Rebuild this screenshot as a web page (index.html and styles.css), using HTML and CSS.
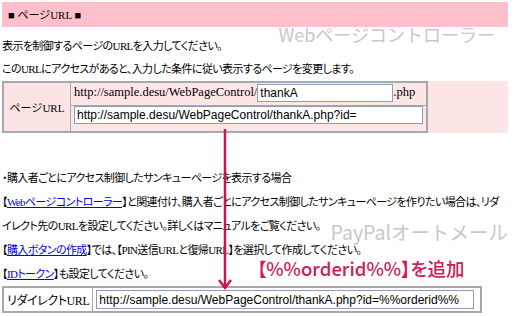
FILE: index.html
```html
<!DOCTYPE html>
<html lang="ja">
<head>
    <meta charset="UTF-8">
    <title>ページURL</title>
    <link rel="stylesheet" href="styles.css">
</head>
<body>
    <div class="page">
        <div class="head">■ ページURL ■</div>
        <div class="mark mark-wpc">Webページコントローラー</div>
        <p>表示を制御するページのURLを入力してください。</p>
        <p>このURLにアクセスがあると、入力した条件に従い表示するページを変更します。</p>

        <div class="box">
            <table class="form form-url">
                <tr>
                    <th rowspan="2">ページURL</th>
                    <td>http://sample.desu/WebPageControl/<input type="text" class="in-short" value="thankA">.php</td>
                </tr>
                <tr>
                    <td><input type="text" class="in-long" value="http://sample.desu/WebPageControl/thankA.php?id="></td>
                </tr>
            </table>
        </div>

        <div class="sect">
            <p>・購入者ごとにアクセス制御したサンキューページを表示する場合</p>
            <p>【<a href="#">Webページコントローラー</a>】と関連付け、購入者ごとにアクセス制御したサンキューページを作りたい場合は、リダ<br>イレクト先のURLを設定してください。詳しくはマニュアルをご覧ください。</p>
            <p>【<a href="#">購入ボタンの作成</a>】では、【PIN送信URLと復帰URL】を選択して作成してください。</p>
            <p>【<a href="#">IDトークン</a>】も設定してください。</p>
            <div class="mark mark-paypal">PayPalオートメール</div>
            <div class="note">【%%orderid%%】を追加</div>
        </div>

        <table class="form form-redirect">
            <tr>
                <th>リダイレクトURL</th>
                <td><input type="text" class="in-redirect" value="http://sample.desu/WebPageControl/thankA.php?id=%%orderid%%"></td>
            </tr>
        </table>

        <svg class="arrow" width="14" height="162" viewBox="0 0 14 162">
            <line x1="7" y1="0" x2="7" y2="159" stroke="#c8174c" stroke-width="2.5"/>
            <polyline points="1,151 7,159 13,151" fill="none" stroke="#c8174c" stroke-width="2.5"/>
        </svg>
    </div>
</body>
</html>
```

FILE: styles.css
```css
body {
    margin: 2px;
    font-family: "Liberation Serif", "Noto Sans CJK JP", serif;
    font-size: 11px;
    color: #000;
    background-color: #fff;
}

.page {
    position: relative;
    width: 506px;
}

p {
    margin: 0;
    line-height: 23px;
    letter-spacing: -0.6px;
    white-space: nowrap;
    font-feature-settings: "palt";
}

a {
    color: #00e;
}

.head {
    height: 25px;
    line-height: 26px;
    padding-left: 6px;
    background-color: #ffc0cb;
    margin-bottom: 8px;
}

.mark {
    position: absolute;
    font-family: "Noto Sans CJK JP", sans-serif;
    font-size: 18px;
    line-height: 20px;
    color: #c8c8c8;
    white-space: nowrap;
}

.mark-wpc {
    top: 22px;
    right: 13px;
}

.mark-paypal {
    top: 56px;
    right: 0;
    font-size: 19.5px;
}

.box {
    background-color: #ffe6e6;
}

.form {
    border-collapse: collapse;
    border: 2px solid #a8a8a8;
}

.form th,
.form td {
    border: 1px solid #a8a8a8;
    font-weight: normal;
    padding: 0 3px;
}

.form-url th {
    width: 60px;
    background-color: #fde4e4;
}

.form-url td {
    height: 21px;
    font-size: 12.5px;
}

.form-url tr:first-child td {
    padding-top: 1px;
    vertical-align: top;
}

.form-url tr:last-child td {
    padding-bottom: 4px;
    vertical-align: top;
}

input {
    font-family: "Liberation Sans", Arial, sans-serif;
    font-size: 12px;
    height: 18px;
    box-sizing: border-box;
    padding: 0 2px;
    border: 1px solid #8c9db5;
    margin: 0;
    vertical-align: middle;
}

.in-short {
    width: 136px;
}

.in-long {
    width: 349px;
}

.sect {
    position: relative;
    margin-top: 33px;
}

.sect p {
    line-height: 24px;
}

.note {
    position: absolute;
    left: 255px;
    top: 92px;
    font-family: "Noto Sans CJK JP", sans-serif;
    font-size: 18.5px;
    line-height: 20px;
    font-weight: 500;
    font-feature-settings: "palt";
    color: #d0185a;
    white-space: nowrap;
}

.form-redirect {
    margin-top: 0;
    width: 480px;
}

.form-redirect th {
    width: 80px;
    height: 23px;
    font-size: 12px;
    letter-spacing: -0.4px;
    font-feature-settings: "palt";
    white-space: nowrap;
}

.in-redirect {
    width: 378px;
    height: 19px;
}

.arrow {
    position: absolute;
    left: 216px;
    top: 127px;
}
```
